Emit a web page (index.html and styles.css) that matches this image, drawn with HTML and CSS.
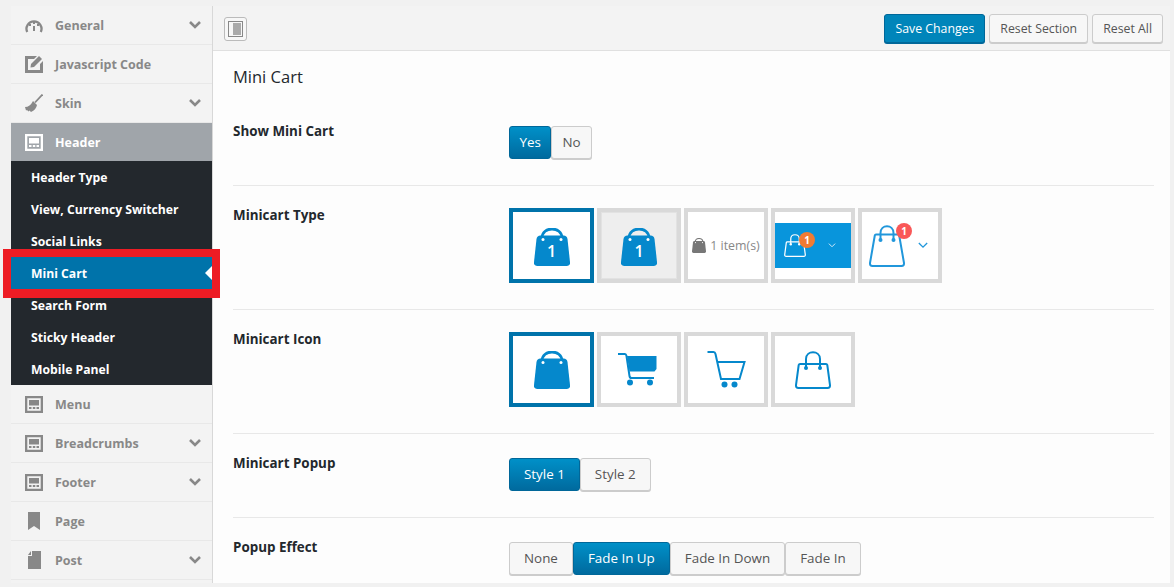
FILE: index.html
```html
<!DOCTYPE html>
<html lang="en">
<head>
    <meta charset="utf-8">
    <title>Theme Options</title>
    <link rel="stylesheet" href="styles.css">
</head>
<body>
    <svg class="defs" width="0" height="0">
        <symbol id="i-layout" viewBox="0 0 18 17">
            <path fill="currentColor" fill-rule="evenodd" d="M0 0h18v17H0zM2.300 2.300v12.400h13.400V2.300z"/>
            <path fill="currentColor" d="M4 4h10v5.500H4zM4 11h2.500v2H4zM7.800 11h2.500v2H7.800zM11.500 11H14v2h-2.500z"/>
        </symbol>
        <symbol id="i-chev" viewBox="0 0 12 8">
            <path fill="none" stroke="currentColor" stroke-width="2.600" d="M1 1l5 5 5-5"/>
        </symbol>
        <symbol id="i-chev-thin" viewBox="0 0 12 8">
            <path fill="none" stroke="currentColor" stroke-width="1.600" d="M1 1l5 5 5-5"/>
        </symbol>
        <symbol id="i-bag" viewBox="0 0 36 38">
            <path fill="none" stroke="currentColor" stroke-width="2.800" d="M8 10C8 -2 28 -2 28 10"/>
            <path fill="currentColor" d="M2.500 11q.5-3.500 4-3.500h23q3.500 0 4 3.500l2.500 23q.4 4-3.500 4H3.500Q-.4 38 0 34z"/>
            <circle cx="9" cy="11.500" r="1.500" fill="#fff"/>
            <circle cx="27" cy="11.500" r="1.500" fill="#fff"/>
        </symbol>
        <symbol id="i-bag-line" viewBox="0 0 36 38">
            <path fill="none" stroke="currentColor" stroke-width="2" d="M5 13h26q1 0 1.300 1L35 34q.3 3-2.500 3h-29Q.7 37 1 34l2.700-20q.3-1 1.300-1z"/>
            <path fill="none" stroke="currentColor" stroke-width="2" d="M11 16V8c0-9 14-9 14 0v8"/>
            <circle cx="11" cy="17" r="2" fill="currentColor"/>
            <circle cx="25" cy="17" r="2" fill="currentColor"/>
        </symbol>
        <symbol id="i-bag-tall" viewBox="0 0 36 42">
            <path fill="none" stroke="currentColor" stroke-width="2" d="M7 9.500h22q1 0 1.200 1L35 38q.3 3-2.500 3h-29Q.7 41 1 38l4.800-27.500q.2-1 1.200-1z"/>
            <path fill="none" stroke="currentColor" stroke-width="2" d="M11.500 14V8c0-9 13-9 13 0v6"/>
            <circle cx="11.500" cy="15" r="2" fill="currentColor"/>
            <circle cx="24.500" cy="15" r="2" fill="currentColor"/>
        </symbol>
    </svg>

    <div class="page">
        <nav class="side">
            <a class="item">
                <svg class="ico" viewBox="0 0 18 13"><path fill="none" stroke="currentColor" stroke-width="2.300" d="M2.200 13A7.500 7.500 0 1 1 15.800 13"/><path fill="currentColor" d="M8 3h2v2H8zM8 7h2v5H8zM4 5h2v2H4zM12 5h2v2h-2z"/></svg>
                <span class="label">General</span>
                <svg class="chev"><use href="#i-chev"/></svg>
            </a>
            <a class="item">
                <svg class="ico ico-tall" viewBox="0 0 18 18"><path fill="currentColor" d="M0 1h12l-3 3H3v11h12V9l3-3v12H0z"/><path fill="currentColor" d="M6 9l8-8 3 3-8 8-3.500.5z"/></svg>
                <span class="label">Javascript Code</span>
            </a>
            <a class="item">
                <svg class="ico ico-tall" viewBox="0 0 18 18"><path fill="none" stroke="currentColor" stroke-width="1.800" d="M17.500.5L10 8.500"/><path fill="currentColor" d="M8 7l4 4q-1 5-6 7l-1.500-1.500-1 1-1.500-1.500-1 .5L0 13q5 0 8-6z"/></svg>
                <span class="label">Skin</span>
                <svg class="chev"><use href="#i-chev"/></svg>
            </a>
            <a class="item item-open">
                <svg class="ico"><use href="#i-layout"/></svg>
                <span class="label">Header</span>
            </a>
            <div class="sub">
                <a class="sub-item">Header Type</a>
                <a class="sub-item">View, Currency Switcher</a>
                <a class="sub-item">Social Links</a>
                <a class="sub-item sub-active">Mini Cart<span class="marker"></span></a>
                <a class="sub-item">Search Form</a>
                <a class="sub-item">Sticky Header</a>
                <a class="sub-item">Mobile Panel</a>
            </div>
            <a class="item">
                <svg class="ico"><use href="#i-layout"/></svg>
                <span class="label">Menu</span>
            </a>
            <a class="item">
                <svg class="ico"><use href="#i-layout"/></svg>
                <span class="label">Breadcrumbs</span>
                <svg class="chev"><use href="#i-chev"/></svg>
            </a>
            <a class="item">
                <svg class="ico"><use href="#i-layout"/></svg>
                <span class="label">Footer</span>
                <svg class="chev"><use href="#i-chev"/></svg>
            </a>
            <a class="item">
                <svg class="ico ico-tall" viewBox="0 0 18 18"><path fill="currentColor" d="M3 0h12v18l-6-4-6 4z"/></svg>
                <span class="label">Page</span>
            </a>
            <a class="item">
                <svg class="ico ico-tall" viewBox="0 0 18 18"><path fill="currentColor" d="M7 0h9v18H3V5h4zM3 4l3-4v4z"/></svg>
                <span class="label">Post</span>
                <svg class="chev"><use href="#i-chev"/></svg>
            </a>
        </nav>

        <main class="main">
            <div class="topbar">
                <button class="toggle"><span class="toggle-in"><span class="toggle-fill"></span></span></button>
                <div class="actions">
                    <button class="btn btn-save">Save Changes</button>
                    <button class="btn btn-reset">Reset Section</button>
                    <button class="btn btn-reset">Reset All</button>
                </div>
            </div>
            <div class="panel">
                <h2 class="title">Mini Cart</h2>

                <div class="row row-first">
                    <div class="name">Show Mini Cart</div>
                    <div class="group group-tight">
                        <span class="seg seg-on">Yes</span><span class="seg">No</span>
                    </div>
                </div>

                <div class="row row-tiles">
                    <div class="name">Minicart Type</div>
                    <div class="tiles">
                        <div class="tile tile-on">
                            <span class="bag-wrap">
                                <svg class="bag"><use href="#i-bag"/></svg>
                                <span class="bag-num">1</span>
                            </span>
                        </div>
                        <div class="tile tile-grey">
                            <span class="bag-wrap">
                                <svg class="bag"><use href="#i-bag"/></svg>
                                <span class="bag-num">1</span>
                            </span>
                        </div>
                        <div class="tile">
                            <svg class="bag-small"><use href="#i-bag"/></svg>
                            <span class="items">1 item(s)</span>
                        </div>
                        <div class="tile">
                            <div class="bar">
                                <span class="bar-bag">
                                    <svg class="bag-mid"><use href="#i-bag-line"/></svg>
                                    <span class="badge badge-orange">1</span>
                                </span>
                                <svg class="chev-small"><use href="#i-chev-thin"/></svg>
                            </div>
                        </div>
                        <div class="tile tile-five">
                            <span class="bar-bag">
                                <svg class="bag-big"><use href="#i-bag-tall"/></svg>
                                <span class="badge badge-red">1</span>
                            </span>
                            <svg class="chev-blue"><use href="#i-chev-thin"/></svg>
                        </div>
                    </div>
                </div>

                <div class="row row-tiles">
                    <div class="name">Minicart Icon</div>
                    <div class="tiles">
                        <div class="tile tile-on"><svg class="bag"><use href="#i-bag"/></svg></div>
                        <div class="tile">
                            <svg class="cart cart-fill" viewBox="0 0 39 33">
                                <path fill="none" stroke="currentColor" stroke-width="2" d="M0 1h7q1 0 1.500 2l3 20q.3 2 2 2H36"/>
                                <path fill="currentColor" d="M9 3h29.500v13l-2 2.500H11.500z"/>
                                <circle cx="12" cy="29.500" r="3" fill="currentColor"/>
                                <circle cx="32" cy="29.500" r="3" fill="currentColor"/>
                            </svg>
                        </div>
                        <div class="tile">
                            <svg class="cart" viewBox="0 0 38 37">
                                <path fill="none" stroke="currentColor" stroke-width="2" d="M0 1h6q1.500 0 2 2l5.500 25H32L37 11H9"/>
                                <circle cx="17" cy="33.500" r="3" fill="currentColor"/>
                                <circle cx="27" cy="33.500" r="3" fill="currentColor"/>
                            </svg>
                        </div>
                        <div class="tile"><svg class="bag"><use href="#i-bag-line"/></svg></div>
                    </div>
                </div>

                <div class="row">
                    <div class="name">Minicart Popup</div>
                    <div class="group">
                        <span class="seg seg-on">Style 1</span><span class="seg">Style 2</span>
                    </div>
                </div>

                <div class="row row-last">
                    <div class="name">Popup Effect</div>
                    <div class="group">
                        <span class="seg">None</span><span class="seg seg-on">Fade In Up</span><span class="seg">Fade In Down</span><span class="seg">Fade In</span>
                    </div>
                </div>
            </div>
        </main>
    </div>
</body>
</html>
```

FILE: styles.css
```css
* {
    box-sizing: border-box;
}
html, body {
    height: 100%;
    margin: 0;
}
body {
    background-color: #f1f1f1;
    color: #444;
    font-family: "Open Sans", "Liberation Sans", sans-serif;
    font-size: 13px;
    overflow: hidden;
}
.defs {
    position: absolute;
}
.page {
    display: flex;
    height: 577px;
    margin: 6px 4px 0 11px;
}

/* left menu */
.side {
    flex: none;
    width: 202px;
    height: 577px;
    border-right: 1px solid #d8d8d8;
    background-color: #f3f3f3;
}
.item {
    display: flex;
    align-items: center;
    height: 39px;
    padding: 0 11px 0 14px;
    border-bottom: 1px solid #e8e8e8;
    color: #888;
    font-size: 12.5px;
    font-weight: 700;
}
.ico {
    flex: none;
    width: 18px;
    height: 17px;
    margin-right: 12px;
}
.ico-tall {
    height: 18px;
}
.label {
    flex: 1;
}
.chev {
    flex: none;
    width: 12px;
    height: 8px;
}
.item-open {
    border-bottom: 0;
    background-color: #a0a5aa;
    color: #fff;
    height: 38px;
}
.sub {
    background-color: #23282d;
}
.sub-item {
    display: block;
    position: relative;
    height: 32px;
    padding-left: 20px;
    color: #fff;
    font-size: 12.2px;
    font-weight: 700;
    line-height: 34px;
}
.sub-active {
    background-color: #0073aa;
}
.sub-active::after {
    content: "";
    position: absolute;
    top: 9px;
    right: 0;
    border: 7px solid transparent;
    border-right-color: #fff;
    border-left-width: 0;
}
.marker {
    position: absolute;
    top: -8px;
    right: -8px;
    bottom: -9px;
    left: -8px;
    border: 8px solid #ed1c24;
    border-bottom-width: 9px;
}

/* top bar */
.main {
    flex: 1;
    min-width: 0;
    overflow: hidden;
    background-color: #fdfdfd;
}
.topbar {
    display: flex;
    align-items: center;
    justify-content: space-between;
    height: 45px;
    padding: 1px 7px 0 11px;
    border-bottom: 1px solid #e0e0e0;
    background-color: #f3f3f3;
}
.toggle {
    width: 23px;
    height: 24px;
    padding: 3px;
    border: 1px solid #bbb;
    border-radius: 3px;
    background: #f7f7f7;
}
.toggle-in {
    display: block;
    height: 16px;
    padding: 1px;
    border: 1px solid #888;
}
.toggle-fill {
    display: block;
    height: 100%;
    margin-left: 3px;
    background-color: #aaa;
}
.actions {
    display: flex;
    gap: 4px;
}
.btn {
    height: 29px;
    padding: 0 10px;
    border: 1px solid #ccc;
    border-radius: 3px;
    font-family: inherit;
    font-size: 12.3px;
}
.btn-save {
    border-color: #006799;
    background-color: #0085ba;
    color: #fff;
    box-shadow: 0 1px 0 #006799;
}
.btn-reset {
    background-color: #f7f7f7;
    color: #555;
    box-shadow: 0 1px 0 #ccc;
}

/* option rows */
.panel {
    padding: 0 16px 0 20px;
}
.title {
    margin: 0;
    padding-top: 15px;
    height: 46px;
    color: #23282d;
    font-size: 16.5px;
    font-weight: 400;
    line-height: 22px;
}
.row {
    display: flex;
    padding: 24px 0 26px;
    border-bottom: 1px solid #e8e8e8;
}
.row-first {
    padding-top: 29px;
}
.row-tiles {
    padding-top: 22px;
}
.row-last {
    border-bottom: 0;
}
.name {
    flex: none;
    width: 276px;
    margin-top: -4px;
    color: #23282d;
    font-size: 13.4px;
    font-weight: 700;
}
.row-tiles .name {
    margin-top: -2px;
}
.group {
    display: flex;
    height: 33px;
}
.seg {
    height: 33px;
    padding: 0 14px;
    border: 1px solid #ccc;
    border-radius: 3px;
    background-color: #f7f7f7;
    color: #555;
    font-size: 13.4px;
    line-height: 31px;
    box-shadow: 0 1px 0 #ccc;
}
.group-tight .seg {
    padding: 0 10px;
}
.group-tight .seg-on {
    padding: 0 9.500px;
}
.seg-on {
    border-color: #006799;
    background: linear-gradient(#0090c8, #006a9e);
    color: #fff;
    box-shadow: none;
}

/* image tiles */
.tiles {
    display: flex;
    gap: 3px;
}
.tile {
    display: flex;
    align-items: center;
    justify-content: center;
    width: 84px;
    height: 75px;
    border: 4px solid #d9d9d9;
    background-color: #fff;
    color: #0588cc;
}
.tile-on {
    border-color: #0073aa;
    width: 85px;
}
.tile-grey {
    background-color: #eee;
    box-shadow: inset 0 0 0 1px #e2e2e2;
}
.bag {
    width: 36px;
    height: 38px;
}
.bag-wrap {
    position: relative;
    display: block;
    height: 38px;
    margin-top: 3px;
}
.bag-num {
    position: absolute;
    top: 11px;
    left: 0;
    width: 36px;
    color: #fff;
    font-size: 16px;
    font-weight: 600;
    line-height: 24px;
    text-align: center;
}
.bag-small {
    width: 14px;
    height: 15px;
    margin-right: 4px;
    color: #777;
}
.items {
    color: #888;
    font-size: 12.4px;
}
.bar {
    display: flex;
    align-items: center;
    width: 100%;
    height: 45px;
    padding-left: 9px;
    background-color: #0895dc;
    color: #fff;
}
.bar-bag {
    position: relative;
    display: block;
}
.bag-mid {
    display: block;
    width: 22px;
    height: 23px;
}
.bag-big {
    display: block;
    width: 36px;
    height: 42px;
    color: #2197db;
}
.badge {
    position: absolute;
    width: 16px;
    height: 16px;
    border-radius: 50%;
    color: #fff;
    font-size: 10px;
    font-weight: 700;
    line-height: 16px;
    text-align: center;
}
.badge-orange {
    top: -2px;
    right: -9px;
    background-color: #f07b33;
}
.badge-red {
    top: -2px;
    right: -7px;
    background-color: #f95858;
}
.chev-small {
    width: 8px;
    height: 5px;
    margin-left: 22px;
    color: #cfe9f8;
}
.chev-blue {
    width: 10px;
    height: 7px;
    margin-left: 13px;
    color: #2197db;
}
.tile-five {
    justify-content: flex-start;
    padding-left: 7px;
}
.cart {
    width: 39px;
    height: 37px;
}
.cart-fill {
    margin-right: 3px;
}
```
